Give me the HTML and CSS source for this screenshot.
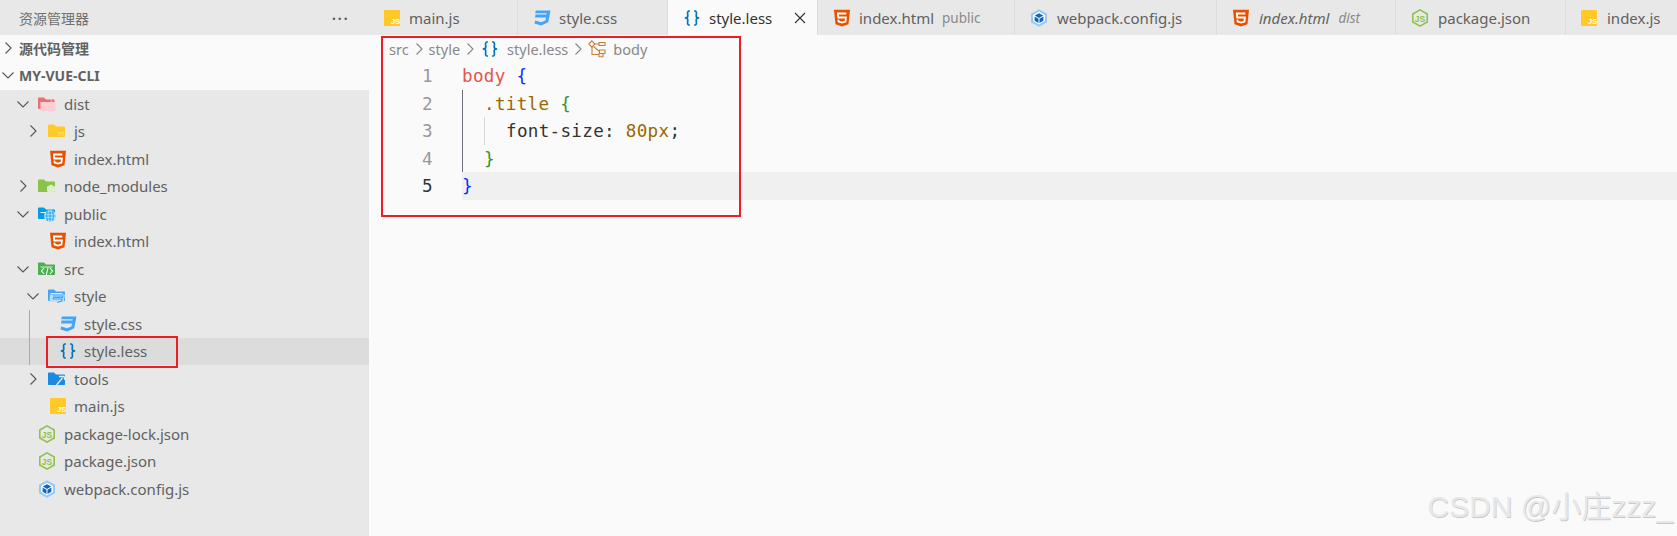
FILE: index.html
```html
<!DOCTYPE html>
<html lang="zh">
<head>
<meta charset="utf-8">
<title>my-vue-cli</title>
<link rel="stylesheet" href="styles.css">
</head>
<body>
<svg class="defs" width="0" height="0" aria-hidden="true">
  <symbol id="i-right" viewBox="0 0 16 16"><path d="M5.500 2.500 11 8l-5.500 5.500" fill="none" stroke="#555" stroke-width="1.100"/></symbol>
  <symbol id="i-down" viewBox="0 0 16 16"><path d="M2.500 5.500 8 11l5.500-5.500" fill="none" stroke="#555" stroke-width="1.100"/></symbol>
  <symbol id="i-html" viewBox="0 0 18 18"><path d="M1 .8h16l-1.500 14.400L9 17.400l-6.500-2.200z" fill="#e65100"/><path d="M13.300 4.500H4.900l.3 4h7.700l-.4 4L9 13.600l-3.400-1.100-.2-1.800" fill="none" stroke="#fff" stroke-width="1.800"/></symbol>
  <symbol id="i-jsbox" viewBox="0 0 18 18"><rect x="1" y="1" width="16" height="16" rx="1" fill="#ffca28"/></symbol>
  <symbol id="i-css" viewBox="0 0 18 18"><path d="M2.800 1.500h14.700l-2.300 11.700-7 3.300-6.700-2 .6-3 6 1.800 4.300-1.900.6-3H2l.6-2.800h10.600l.5-1.400H2.200z" fill="#42a5f5"/></symbol>
  <symbol id="i-braces" viewBox="0 0 18 18"><path d="M6.800 1.800C3.500 1.800 4.800 5 4.800 7c0 1.500-1 2-3 2 2 0 3 .5 3 2 0 2-1.300 5.200 2 5.200M11.200 1.800c3.300 0 2 3.200 2 5.200 0 1.500 1 2 3 2-2 0-3 .5-3 2 0 2 1.300 5.200-2 5.200" fill="none" stroke="#0277bd" stroke-width="1.700"/></symbol>
  <symbol id="i-hex" viewBox="0 0 18 18"><path d="M9 .9 16.200 5v8L9 17.100 1.800 13V5z" fill="none" stroke="#8bc34a" stroke-width="1.600"/></symbol>
  <symbol id="i-webpack" viewBox="0 0 18 18"><path d="M9 .3 17 4.800v8.400L9 17.700 1 13.200V4.800z" fill="#90caf9"/><path d="M9 2.600 15 6v6l-6 3.400L3 12V6z" fill="#fff"/><path d="M9 4.200 13.200 6.600 9 9 4.800 6.600zM4.600 7.600l3.900 2.200v4.200l-3.900-2.200zM13.400 7.600 9.500 9.800V14l3.900-2.200z" fill="#1565c0"/></symbol>
  <symbol id="i-dist" viewBox="0 0 20 18"><path d="M1 3.500C1 3 1.400 2.500 2 2.500h5l2 2h7.500c.6 0 1 .4 1 1V14H2c-.6 0-1-.4-1-1z" fill="#e57373"/><path d="M3.500 7.500h11v-2" fill="none" stroke="#fff" stroke-width=".8" stroke-dasharray="2 1"/><rect x="3.500" y="7" width="15" height="9" rx="1" fill="#ffcdd2"/></symbol>
  <symbol id="i-folder-y" viewBox="0 0 20 18"><path d="M1 3.500C1 3 1.400 2.500 2 2.500h5l2 2h8c.6 0 1 .4 1 1V14c0 .6-.4 1-1 1H2c-.6 0-1-.4-1-1z" fill="#ffca28"/></symbol>
  <symbol id="i-nm" viewBox="0 0 20 18"><path d="M1 3.500C1 3 1.400 2.500 2 2.500h5l2 2h8c.6 0 1 .4 1 1V14c0 .6-.4 1-1 1H2c-.6 0-1-.4-1-1z" fill="#8bc34a"/><path d="M14 7.500l4 2.300v4.400L14 16.500l-4-2.300V9.800z" fill="#dcedc8"/></symbol>
  <symbol id="i-pub" viewBox="0 0 20 18"><path d="M1 3.500C1 3 1.400 2.500 2 2.500h5l2 2h8c.6 0 1 .4 1 1V14H2c-.6 0-1-.4-1-1z" fill="#039be5"/><path d="M3.500 7.500h11" stroke="#fff" stroke-width=".9"/><circle cx="13" cy="11" r="6" fill="#b3e5fc"/><path d="M7.500 11h11M13 5.500v11M9 8h8M9 14h8M10.500 6c-1 3-1 7 0 10M15.500 6c1 3 1 7 0 10" fill="none" stroke="#039be5" stroke-width=".7"/></symbol>
  <symbol id="i-src" viewBox="0 0 20 18"><path d="M1 3.500C1 3 1.400 2.500 2 2.500h5l2 2h8c.6 0 1 .4 1 1V14c0 .6-.4 1-1 1H2c-.6 0-1-.4-1-1z" fill="#4caf50"/><path d="M3.500 7h12" stroke="#fff" stroke-width=".8"/><path d="M7 8 4.500 11 7 14M13 8l2.500 3-2.500 3M11 7.500l-2 9" fill="none" stroke="#fff" stroke-width="1.100"/></symbol>
  <symbol id="i-style" viewBox="0 0 20 18"><path d="M1 3.500C1 3 1.400 2.500 2 2.500h5l2 2h8c.6 0 1 .4 1 1V14H2c-.6 0-1-.4-1-1z" fill="#42a5f5"/><path d="M3.500 6.500h12" stroke="#fff" stroke-width=".8"/><path d="M3 7.500h15l-1.500 7.500h-14z" fill="#bbdefb"/><path d="M6 9h10l-.4 1.500H6.500l-.3 1.500h9l-.5 2-4.500 1.500" fill="none" stroke="#42a5f5" stroke-width="1.100"/></symbol>
  <symbol id="i-tools" viewBox="0 0 20 18"><path d="M1 3.500C1 3 1.400 2.500 2 2.500h5l2 2h8c.6 0 1 .4 1 1V14c0 .6-.4 1-1 1H2c-.6 0-1-.4-1-1z" fill="#1e88e5"/><path d="M9.500 15 15.500 8M12 6.500h5l1 3.500" fill="none" stroke="#e3f2fd" stroke-width="1.300"/></symbol>
  <symbol id="i-struct" viewBox="0 0 18 18"><path d="M6 4h5M5.500 6.500l6 5M4 7v7.500h7" fill="none" stroke="#c77f3a" stroke-width="1.100"/><path d="M3.800 .8 6.800 4 3.800 7.200.8 4zM11 2.500h6v3h-6zM11.500 10h5.500v3.500h-5.500zM11 13.500h4v3.300h-4z" fill="none" stroke="#c77f3a" stroke-width="1.100"/></symbol>
</svg>

<div class="app">
  <aside class="sidebar">
    <header class="side-title"><span>资源管理器</span><span class="dots">···</span></header>
    <div class="section-head"><svg class="chev"><use href="#i-right"/></svg><span>源代码管理</span></div>
    <div class="section-head"><svg class="chev"><use href="#i-down"/></svg><span>MY-VUE-CLI</span></div>
    <ul class="tree">
      <li class="row lv1"><svg class="chev"><use href="#i-down"/></svg><svg class="fold"><use href="#i-dist"/></svg><span>dist</span></li>
      <li class="row lv2"><svg class="chev"><use href="#i-right"/></svg><svg class="fold" viewBox="0 0 20 18"><use href="#i-folder-y"/><text x="14" y="14" class="ico-jsf">JS</text></svg><span>js</span></li>
      <li class="row lv2 file"><svg class="ico"><use href="#i-html"/></svg><span>index.html</span></li>
      <li class="row lv1"><svg class="chev"><use href="#i-right"/></svg><svg class="fold"><use href="#i-nm"/></svg><span>node_modules</span></li>
      <li class="row lv1"><svg class="chev"><use href="#i-down"/></svg><svg class="fold"><use href="#i-pub"/></svg><span>public</span></li>
      <li class="row lv2 file"><svg class="ico"><use href="#i-html"/></svg><span>index.html</span></li>
      <li class="row lv1"><svg class="chev"><use href="#i-down"/></svg><svg class="fold"><use href="#i-src"/></svg><span>src</span></li>
      <li class="row lv2"><svg class="chev"><use href="#i-down"/></svg><svg class="fold"><use href="#i-style"/></svg><span>style</span></li>
      <li class="row lv3 file guide"><svg class="ico"><use href="#i-css"/></svg><span>style.css</span></li>
      <li class="row lv3 file guide selected"><svg class="ico"><use href="#i-braces"/></svg><span>style.less</span></li>
      <li class="row lv2"><svg class="chev"><use href="#i-right"/></svg><svg class="fold"><use href="#i-tools"/></svg><span>tools</span></li>
      <li class="row lv2 file"><svg class="ico" viewBox="0 0 18 18"><use href="#i-jsbox"/><text x="8" y="15" class="ico-js">JS</text></svg><span>main.js</span></li>
      <li class="row lv1 file"><svg class="ico" viewBox="0 0 18 18"><use href="#i-hex"/><text x="9" y="12.500" class="ico-node">JS</text></svg><span>package-lock.json</span></li>
      <li class="row lv1 file"><svg class="ico" viewBox="0 0 18 18"><use href="#i-hex"/><text x="9" y="12.500" class="ico-node">JS</text></svg><span>package.json</span></li>
      <li class="row lv1 file"><svg class="ico"><use href="#i-webpack"/></svg><span>webpack.config.js</span></li>
    </ul>
  </aside>

  <main class="main">
    <nav class="tabs">
      <div class="tab w-main"><svg class="ico" viewBox="0 0 18 18"><use href="#i-jsbox"/><text x="8" y="15" class="ico-js">JS</text></svg><span>main.js</span></div>
      <div class="tab w-css"><svg class="ico"><use href="#i-css"/></svg><span>style.css</span></div>
      <div class="tab w-less active"><svg class="ico"><use href="#i-braces"/></svg><span>style.less</span><svg class="close" viewBox="0 0 16 16"><path d="M3 3l10 10M13 3 3 13" fill="none" stroke="#333" stroke-width="1.100"/></svg></div>
      <div class="tab w-pub"><svg class="ico"><use href="#i-html"/></svg><span>index.html</span><small>public</small></div>
      <div class="tab w-wp"><svg class="ico"><use href="#i-webpack"/></svg><span>webpack.config.js</span></div>
      <div class="tab w-dist preview"><svg class="ico"><use href="#i-html"/></svg><span>index.html</span><small>dist</small></div>
      <div class="tab w-pkg"><svg class="ico" viewBox="0 0 18 18"><use href="#i-hex"/><text x="9" y="12.500" class="ico-node">JS</text></svg><span>package.json</span></div>
      <div class="tab w-idx"><svg class="ico" viewBox="0 0 18 18"><use href="#i-jsbox"/><text x="8" y="15" class="ico-js">JS</text></svg><span>index.js</span></div>
    </nav>

    <div class="crumbs">
      <span>src</span><svg class="sep"><use href="#i-right"/></svg>
      <span>style</span><svg class="sep"><use href="#i-right"/></svg>
      <svg class="ico c-file"><use href="#i-braces"/></svg><span>style.less</span><svg class="sep"><use href="#i-right"/></svg>
      <svg class="ico c-sym"><use href="#i-struct"/></svg><span>body</span>
    </div>

    <div class="code">
      <div class="line"><span class="num">1</span><span class="src"><span class="tag">body</span> <span class="b1">{</span></span></div>
      <div class="line"><span class="num">2</span><span class="src g1"><span class="cls">.title</span> <span class="b2">{</span></span></div>
      <div class="line"><span class="num">3</span><span class="src g2">font-size: <span class="val">80px</span>;</span></div>
      <div class="line"><span class="num">4</span><span class="src g1"><span class="b2">}</span></span></div>
      <div class="line current"><span class="num">5</span><span class="src"><span class="b1">}</span></span></div>
    </div>
  </main>
</div>

<div class="mark mark-file"></div>
<div class="mark mark-code"></div>
<div class="watermark">CSDN @小庄zzz_</div>
</body>
</html>
```
FILE: styles.css
```css
* { box-sizing: border-box; }
html, body { margin: 0; height: 100%; overflow: hidden; }
body { background: #fafafa; font-family: "Noto Sans", "Noto Sans CJK SC", sans-serif; color: #616161; font-size: 15px; position: relative; }
.defs { position: absolute; }
.app { display: flex; height: 536px; }
svg { flex: none; }
.ico-js { font: bold 7.500px "Liberation Sans", sans-serif; fill: #fff; }
.ico-node { font: bold 8.500px "Liberation Sans", sans-serif; fill: #8bc34a; text-anchor: middle; }
.ico-jsf { font: bold 6px "Liberation Sans", sans-serif; fill: #ffe082; text-anchor: middle; }

.sidebar { width: 369px; background: #e8e8e8; flex: none; }
.side-title { height: 35px; display: flex; justify-content: space-between; align-items: center; padding: 0 20px 0 19px; font-size: 14px; color: #6f6f6f; }
.dots { font-size: 18px; letter-spacing: 1px; color: #555; line-height: 1; }
.section-head { height: 27.500px; background: #fafafa; display: flex; align-items: center; font-size: 14px; font-weight: 700; color: #616161; padding-bottom: 2px; }
.section-head .chev { margin: 0 3px 0 0; }
.chev { width: 16px; height: 16px; margin-right: 6px; }
.fold { width: 20px; height: 18px; margin-right: 7px; }
.ico { width: 18px; height: 18px; }
.tree { list-style: none; margin: 0; padding: 0; }
.row { height: 27.500px; display: flex; align-items: center; position: relative; }
.lv1 { padding-left: 15px; }
.lv2 { padding-left: 25px; }
.lv1.file { padding-left: 38px; }
.lv2.file { padding-left: 49px; }
.lv3.file { padding-left: 59px; }
.row.file .ico { margin-right: 7px; }
.row.lv1.file .ico { margin-right: 8px; }
.row.selected { background: #dcdcdc; }
.guide::before { content: ""; position: absolute; left: 29px; top: 0; bottom: 0; width: 1px; background: #aaa; }

.main { flex: 1; min-width: 0; display: flex; flex-direction: column; }
.tabs { display: flex; height: 35px; background: #e8e8e8; flex: none; }
.tab { height: 35px; display: flex; align-items: center; gap: 8px; padding-left: 15px; border-right: 1px solid #dcdcdc; flex: none; white-space: nowrap; }
.tab small { font-size: 13.500px; color: #8a8a8a; }
.w-main { width: 149px; padding-left: 14px; }
.w-css { width: 150px; }
.w-less { width: 150px; background: #fafafa; color: #333; }
.w-pub { width: 197px; }
.w-wp { width: 202px; gap: 9px; }
.w-dist { width: 179px; gap: 9px; }
.w-pkg { width: 170px; gap: 9px; }
.w-idx { flex: 1; padding-left: 14px; gap: 9px; border-right: 0; }
.preview span, .preview small { font-style: italic; }
.close { width: 16px; height: 16px; margin-left: auto; margin-right: 9px; }

.crumbs { height: 27px; padding-left: 20px; display: flex; align-items: center; font-size: 14.500px; color: #888; flex: none; }
.sep { width: 16px; height: 16px; margin: 0 2px; opacity: .7; }
.c-file { margin: 0 8px 0 1px; }
.c-sym { margin-right: 7px; }

.code { font-family: "DejaVu Sans Mono", "Liberation Mono", monospace; font-size: 17.600px; color: #333; }
.line { height: 27.500px; line-height: 29px; display: flex; white-space: pre; letter-spacing: .3px; }
.num { width: 93px; padding-right: 29px; text-align: right; color: #999; flex: none; }
.src { flex: 1; position: relative; }
.line.current .src { background: #f0f0f0; }
.line.current .num { color: #333; }
.g1 { padding-left: 22px; }
.g2 { padding-left: 44px; }
.g1::before, .g2::before { content: ""; position: absolute; left: 0; top: 0; bottom: 0; width: 1px; background: #6e6e7e; }
.g2::after { content: ""; position: absolute; left: 22px; top: 0; bottom: 0; width: 1px; background: #d8d8d8; }
.tag { color: #e45649; }
.cls { color: #986801; }
.val { color: #986801; }
.b1 { color: #0431fa; }
.b2 { color: #319331; }

.mark { position: absolute; border: 2px solid #ee1c25; pointer-events: none; }
.mark-file { left: 46px; top: 336px; width: 132px; height: 32px; }
.mark-code { left: 381px; top: 36px; width: 360px; height: 181px; }
.watermark { position: absolute; right: 4px; top: 482px; font-family: "Liberation Sans", "Noto Sans CJK SC", sans-serif; font-size: 30px; color: #e8e8e8; text-shadow: .6px .6px .6px #c8c8c8; white-space: nowrap; }
```
